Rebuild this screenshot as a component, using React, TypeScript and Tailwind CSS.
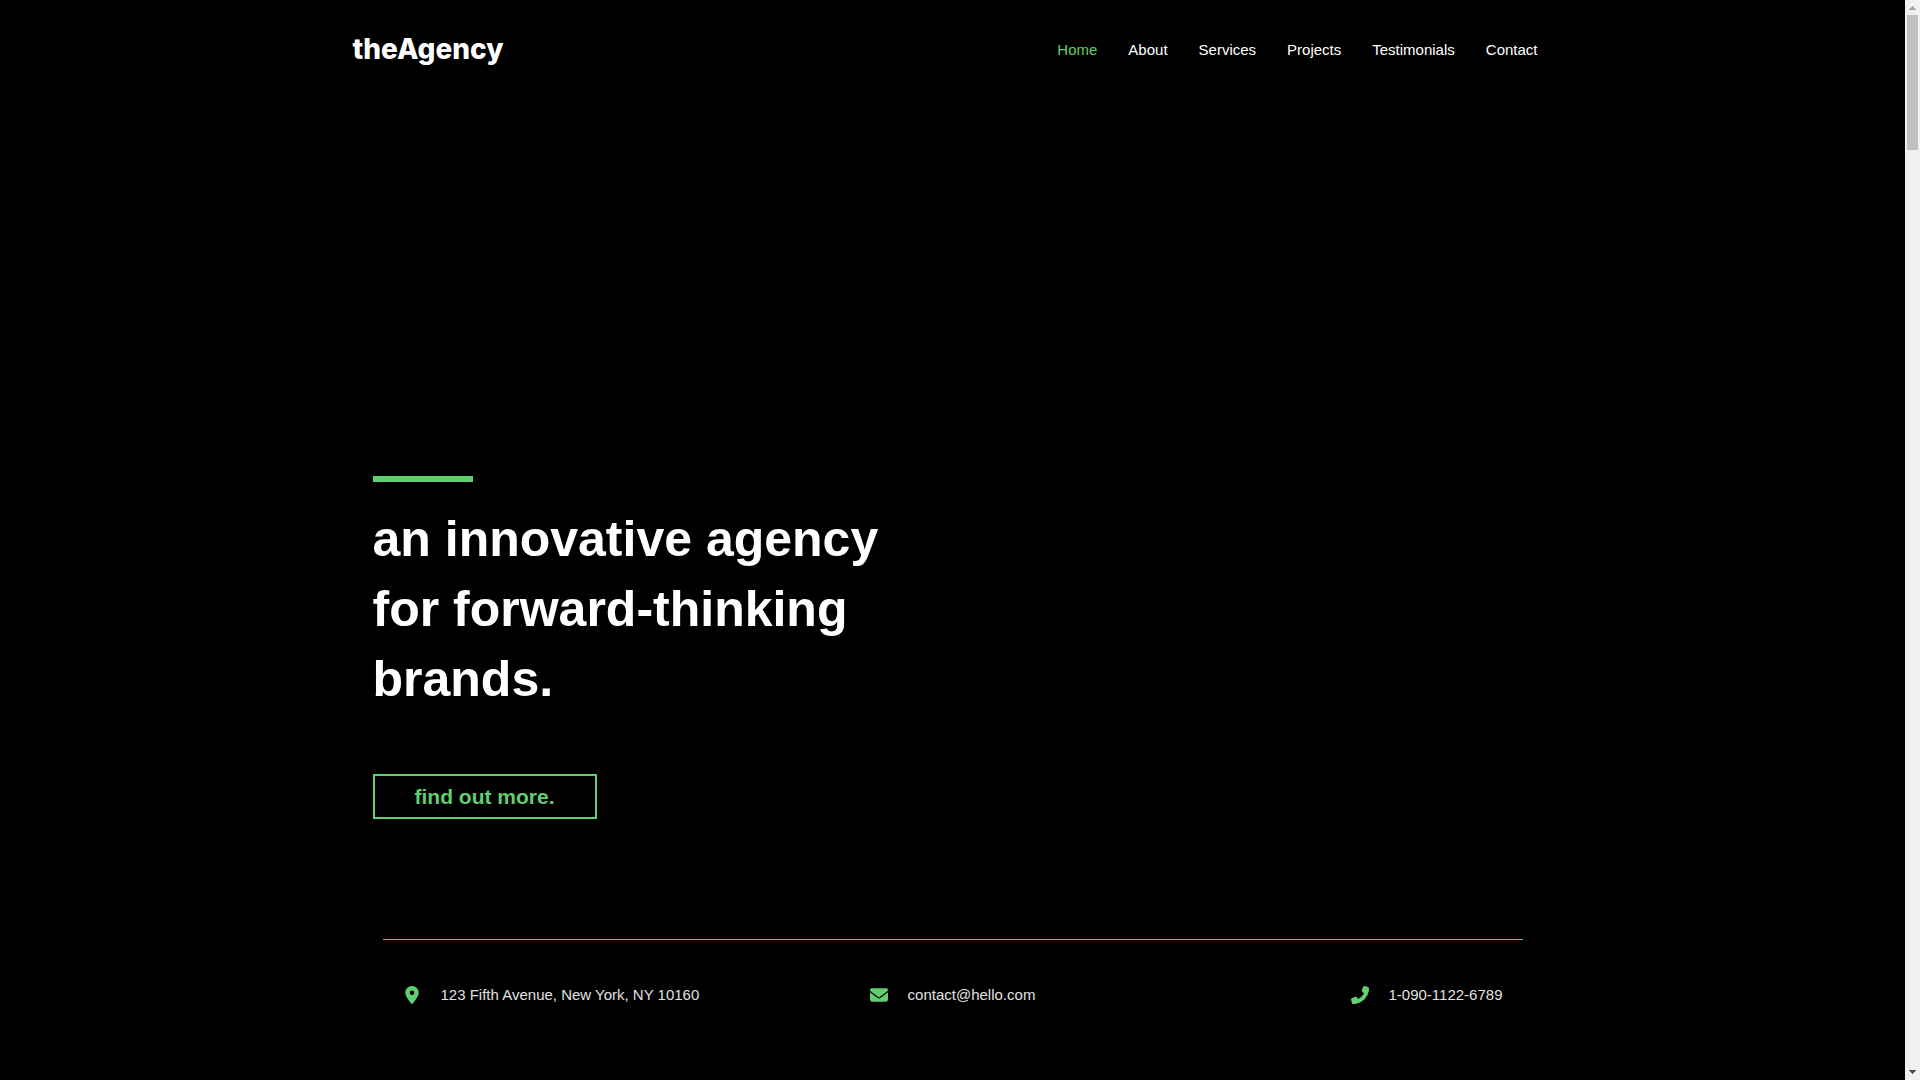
import React from "react";
import { FaEnvelope, FaLocationDot, FaPhoneFlip } from "react-icons/fa6";

const navLinks = ["Home", "About", "Services", "Projects", "Testimonials", "Contact"];

const Header = () => {
  return (
    <header className="mx-auto flex h-[100px] w-full max-w-[1200px] items-center justify-between">
      <a
        href="#home"
        className="pb-[2px] font-['Inter',sans-serif] text-[28px] leading-[32px] font-extrabold"
      >
        theAgency
      </a>
      <nav>
        <ul className="flex gap-px">
          {navLinks.map((label) => (
            <li key={label}>
              <a
                href={`#${label.toLowerCase()}`}
                className={
                  label === "Home" ? "block px-[15px] text-[#61ce70]" : "block px-[15px]"
                }
              >
                {label}
              </a>
            </li>
          ))}
        </ul>
      </nav>
    </header>
  );
};

const Hero = () => {
  return (
    <section id="home" className="mx-auto w-full max-w-[1160px] pt-[376px]">
      <div className="h-[6px] w-[100px] bg-[#61ce70]" />
      <h1 className="mt-[22px] max-w-[560px] text-[50px] leading-[70px] font-bold">
        an innovative agency for forward-thinking brands.
      </h1>
      <a
        href="#about"
        className="mt-[60px] block w-fit border-2 border-[#61ce70] px-10 py-[10px] text-[21px] leading-[21px] font-bold text-[#61ce70]"
      >
        find out more.
      </a>
    </section>
  );
};

const ContactBar = () => {
  return (
    <footer
      id="contact"
      className="mx-auto mt-[120px] w-full max-w-[1140px] border-t border-[#61ce70] px-5 pt-11 text-[#e0e0e0]"
    >
      <ul className="grid grid-cols-3">
        <li className="flex items-center gap-5">
          <FaLocationDot className="size-[18px] text-[#61ce70]" />
          <span>123 Fifth Avenue, New York, NY 10160</span>
        </li>
        <li className="flex items-center justify-center gap-5">
          <FaEnvelope className="size-[18px] text-[#61ce70]" />
          <a href="mailto:contact@hello.com">contact@hello.com</a>
        </li>
        <li className="flex items-center justify-end gap-5">
          <FaPhoneFlip className="size-[18px] text-[#61ce70]" />
          <a href="tel:1-090-1122-6789">1-090-1122-6789</a>
        </li>
      </ul>
    </footer>
  );
};

const ScrollTrack = () => {
  return (
    <div
      aria-hidden="true"
      className="sticky top-0 flex h-screen w-[15px] shrink-0 flex-col items-center bg-[#f1f1f1]"
    >
      <svg className="size-[15px]" viewBox="0 0 15 15" shapeRendering="crispEdges">
        <path d="M7 6h1v1h1v1h1v1h1v1H4V9h1V8h1V7h1z" fill="#a3a3a3" />
      </svg>
      <div className="h-[135px] w-[11px] bg-[#c1c1c1]" />
      <svg className="mt-auto size-[15px]" viewBox="0 0 15 15" shapeRendering="crispEdges">
        <path d="M4 5h7v1h-1v1H9v1H8v1H7V8H6V7H5V6H4z" fill="#505050" />
      </svg>
    </div>
  );
};

export default function App() {
  return (
    <div className="flex min-h-screen bg-black font-['Liberation_Sans',Arial,sans-serif] text-[15px] leading-[22px] text-white">
      <main className="min-w-0 flex-1">
        <Header />
        <Hero />
        <ContactBar />
      </main>
      <ScrollTrack />
    </div>
  );
}
